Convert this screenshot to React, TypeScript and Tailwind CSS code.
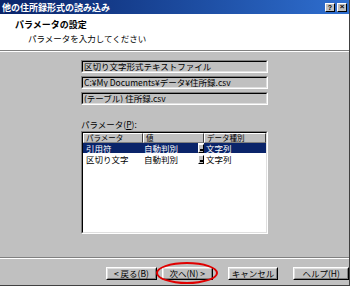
import React from "react";

const jp = { fontFamily: '"Noto Sans CJK JP", "Noto Sans", sans-serif' };

const Sunken = ({ children }: { children: React.ReactNode }) => (
  <div className="border border-t-[#808080] border-l-[#808080] border-b-white border-r-white">
    <div className="h-[11px] border border-t-black border-l-black border-b-[#dfdfdf] border-r-[#dfdfdf] bg-[#c0c0c0] flex items-center pl-[1px] text-[8.5px] leading-none text-black whitespace-nowrap overflow-hidden">
      {children}
    </div>
  </div>
);

const HeadCell = ({ w, label }: { w: string; label: string }) => (
  <div
    className={`${w} h-[10px] bg-[#c0c0c0] border-t border-l border-t-white border-l-white border-b border-r border-b-[#808080] border-r-[#404040] flex items-center pl-[2px] text-[7.5px] leading-none`}
  >
    {label}
  </div>
);

const Drop = () => (
  <div className="w-[6px] h-[9px] bg-[#c0c0c0] border border-t-white border-l-white border-b-black border-r-black flex items-end justify-center">
    <div className="w-[3px] h-[1.5px] bg-black mb-[1px]" />
  </div>
);

const Button = ({ w, label }: { w: string; label: string }) => (
  <div className={`${w} h-[13px] border border-t-white border-l-white border-b-black border-r-black`}>
    <div className="h-full border border-t-[#dfdfdf] border-l-[#dfdfdf] border-b-[#808080] border-r-[#808080] bg-[#c0c0c0] flex items-center justify-center text-[8.5px] leading-none">
      {label}
    </div>
  </div>
);

export default function App() {
  return (
    <div className="w-[350px] h-[286px] bg-[#c0c0c0] flex flex-col overflow-hidden text-black border-r border-b border-r-[#404040] border-b-[#404040]" style={jp}>
      {/* title bar */}
      <div className="h-[14px] bg-gradient-to-r from-[#0a246a] to-[#2f6fd0] flex items-center justify-between pl-[2px] pr-[2px]">
        <span className="text-white text-[9px] font-bold leading-none">他の住所録形式の読み込み</span>
        <div className="flex gap-[2px]">
          <div className="w-[10px] h-[9px] bg-[#c0c0c0] border border-t-white border-l-white border-b-black border-r-black flex items-center justify-center text-[7px] font-bold leading-none" style={{ fontFamily: '"Liberation Sans", sans-serif' }}>?</div>
          <div className="w-[10px] h-[9px] bg-[#c0c0c0] border border-t-white border-l-white border-b-black border-r-black flex items-center justify-center text-[8px] font-bold leading-none" style={{ fontFamily: '"Liberation Sans", sans-serif' }}>×</div>
        </div>
      </div>
      {/* header */}
      <div className="h-[36px] bg-white flex flex-col pl-[15px] pt-[5px] gap-[1px]">
        <span className="text-[9px] font-bold leading-[12px]">パラメータの設定</span>
        <span className="text-[8.5px] leading-[12px] pl-[13px]">パラメータを入力してください</span>
      </div>
      <div className="h-[1px] bg-[#808080]" />
      <div className="h-[1px] bg-white" />
      {/* body */}
      <div className="h-[205px] pl-[81px] pt-[8px] flex flex-col">
        <div className="w-[187px] flex flex-col gap-[3px]">
          <Sunken>区切り文字形式テキストファイル</Sunken>
          <Sunken>C:¥My Documents¥データ¥住所録.csv</Sunken>
          <Sunken>(テーブル) 住所録.csv</Sunken>
        </div>
        <div className="mt-[15px] text-[8.5px] leading-none h-[11px]">パラメータ(<span className="underline">P</span>):</div>
        <div className="w-[187px] h-[103px] border border-t-[#808080] border-l-[#808080] border-b-white border-r-white">
          <div className="h-full border border-t-black border-l-black border-b-[#dfdfdf] border-r-[#dfdfdf] bg-white flex flex-col">
            <div className="flex">
              <HeadCell w="w-[60px]" label="パラメータ" />
              <HeadCell w="w-[61px]" label="値" />
              <HeadCell w="w-[62px]" label="データ種別" />
            </div>
            <div className="flex h-[10px] items-center text-[8.5px] leading-none">
              <div className="w-[115px] h-full bg-[#0a246a] text-white flex items-center pl-[3px]">
                <span className="w-[58px]">引用符</span>
                <span>自動判別</span>
              </div>
              <Drop />
              <div className="w-[62px] h-full bg-[#0a246a] text-white flex items-center pl-[2px]">文字列</div>
            </div>
            <div className="flex h-[10px] items-center text-[8.5px] leading-none mt-[1px]">
              <div className="w-[115px] h-full flex items-center pl-[3px]">
                <span className="w-[58px]">区切り文字</span>
                <span>自動判別</span>
              </div>
              <Drop />
              <div className="w-[62px] h-full flex items-center pl-[2px]">文字列</div>
            </div>
          </div>
        </div>
      </div>
      <div className="h-[1px] bg-[#808080]" />
      <div className="h-[1px] bg-white" />
      {/* buttons */}
      <div className="relative flex pl-[106px] pt-[8px] gap-[5px]">
        <Button w="w-[52px]" label="< 戻る(B)" />
        <Button w="w-[52px]" label="次へ(N) >" />
        <div className="w-[5px]" />
        <Button w="w-[52px]" label="キャンセル" />
        <div className="w-[5px]" />
        <Button w="w-[57px]" label="ヘルプ(H)" />
        <div className="absolute left-[156px] top-[3px] w-[62px] h-[22px] rounded-[50%] border-2 border-[#e00000]" />
      </div>
    </div>
  );
}
